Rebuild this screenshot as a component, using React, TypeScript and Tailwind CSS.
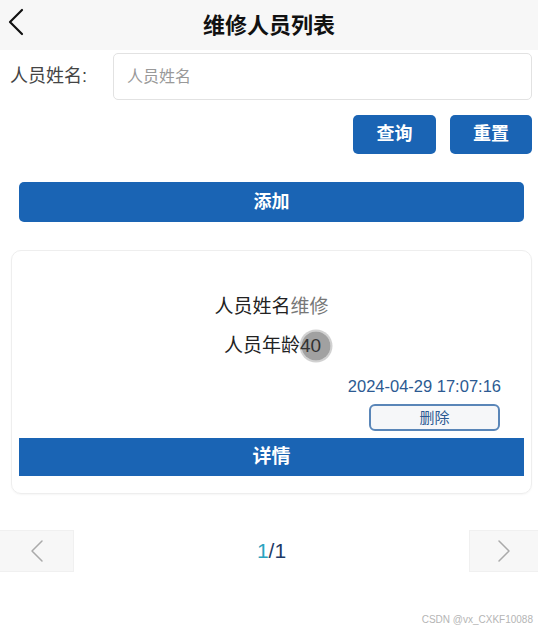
import { ChevronLeft, ChevronRight } from 'lucide-react';

const font = { fontFamily: '"Liberation Sans", "Noto Sans CJK SC", sans-serif' };

export default function App() {
  return (
    <div className="relative h-[633px] w-[538px] overflow-hidden bg-white text-[#222]" style={font}>
      {/* 顶部导航 */}
      <div className="relative flex h-[50px] items-center justify-center bg-[#f7f7f7]">
        <ChevronLeft className="absolute left-[-8px] top-[-2px] h-[48px] w-[48px] text-[#111]" strokeWidth={1.1} />
        <h1 className="text-[22px] font-bold text-[#111]">维修人员列表</h1>
      </div>

      {/* 查询条件 */}
      <div className="mt-[3px] flex items-center pl-[10px] pr-[6px]">
        <span className="w-[103px] text-[18px] text-[#444]">人员姓名:</span>
        <input
          className="h-[47px] flex-1 rounded-[5px] border border-[#e2e2e2] px-[13px] text-[16px] placeholder:text-[#999] outline-none"
          placeholder="人员姓名"
        />
      </div>

      <div className="mt-[15px] flex justify-end gap-[14px] pr-[6px]">
        <button className="h-[39px] w-[83px] rounded-[5px] bg-[#1a64b4] text-[18px] font-bold text-white">查询</button>
        <button className="h-[39px] w-[82px] rounded-[5px] bg-[#1a64b4] text-[18px] font-bold text-white">重置</button>
      </div>

      <div className="mt-[28px] px-[19px] pr-[14px]">
        <button className="h-[40px] w-full rounded-[5px] bg-[#1a64b4] text-[18px] font-bold text-white">添加</button>
      </div>

      {/* 列表卡片 */}
      <div className="ml-[11px] mr-[6px] mt-[28px] rounded-[10px] border border-[#eeeeee] px-[7px] pb-[17px] pt-[44px] shadow-[0_1px_2px_rgba(0,0,0,0.04)]">
        <div className="text-center text-[19px] leading-[24px]">
          人员姓名<span className="text-[#777]">维修</span>
        </div>
        <div className="mt-[15px] text-center text-[19px] leading-[24px]">
          <span className="inline-block w-[2px]" />
          人员年龄<span className="relative text-[#333]">
            <span className="absolute left-[16px] top-1/2 h-[29px] w-[29px] -translate-x-1/2 -translate-y-1/2 rounded-full bg-[#8a8a8a]/80 ring-2 ring-[#bdbdbd]/70" />
            <span className="relative">40</span>
          </span>
        </div>
        <div className="mt-[18px] flex flex-col items-end pr-[23px]">
          <span className="text-[16.5px] leading-[20px] text-[#2c5a92]">2024-04-29 17:07:16</span>
          <button className="mt-[8px] mr-[1px] h-[27px] w-[131px] rounded-[6px] border-2 border-[#5a86b8] bg-[#f6f7f9] text-[15px] leading-none text-[#2c5a92]">
            删除
          </button>
        </div>
        <button className="mt-[7px] h-[38px] w-full bg-[#1a64b4] text-[19px] font-bold text-white">详情</button>
      </div>

      {/* 分页 */}
      <div className="mt-[36px] flex h-[42px] items-center justify-between">
        <div className="flex h-full w-[74px] items-center justify-center border border-l-0 border-[#f0f0f0] bg-[#f7f7f7]">
          <ChevronLeft className="h-[40px] w-[40px] text-[#aaa]" strokeWidth={0.9} />
        </div>
        <div className="text-[21px]">
          <span className="text-[#2ba3bf]">1</span>
          <span className="text-[#1f3a66]">/1</span>
        </div>
        <div className="flex h-full w-[69px] items-center justify-center border border-r-0 border-[#f0f0f0] bg-[#f7f7f7]">
          <ChevronRight className="h-[40px] w-[40px] text-[#aaa]" strokeWidth={0.9} />
        </div>
      </div>

      <div className="absolute bottom-[6px] right-[5px] text-[10px] text-[#b5b5b5]">CSDN @vx_CXKF10088</div>
    </div>
  );
}
